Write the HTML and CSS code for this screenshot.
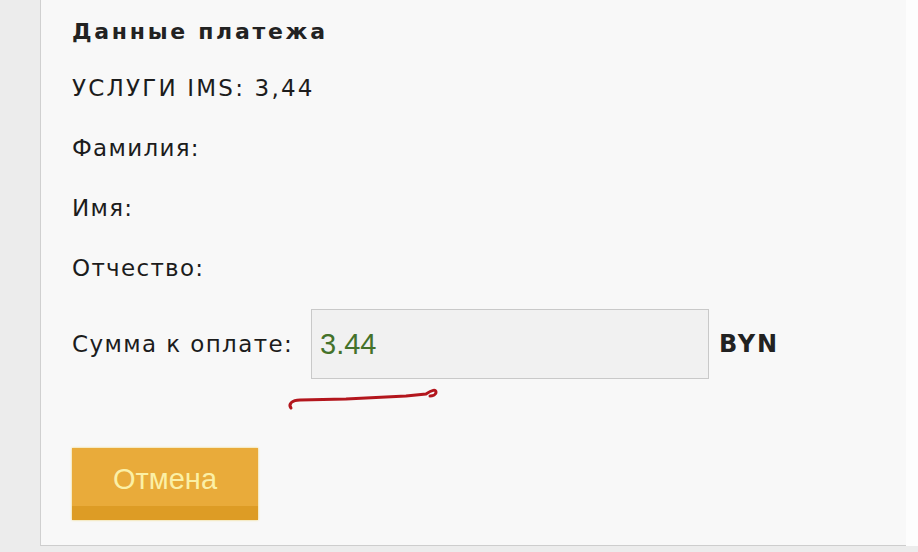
FILE: index.html
```html
<!DOCTYPE html>
<html lang="ru">
<head>
    <meta charset="UTF-8">
    <title>Данные платежа</title>
    <link rel="stylesheet" href="styles.css">
</head>
<body>

<div class="page">
    <div class="panel">
        <h2 class="title">Данные платежа</h2>
        <div class="row row-service">УСЛУГИ IMS: 3,44</div>
        <div class="row">Фамилия:</div>
        <div class="row">Имя:</div>
        <div class="row">Отчество:</div>

        <div class="sum-row">
            <label class="sum-label" for="sum">Сумма к оплате:</label>
            <input class="sum-input" id="sum" type="text" value="3.44" readonly>
            <span class="currency">BYN</span>
        </div>

        <!-- red pen mark under the amount -->
        <svg class="mark" width="160" height="30" viewBox="0 0 160 30">
            <path d="M5 22 C2 18 6 14 14 14 L60 13 L120 10 L140 8 C146 4 150 3 150 6 C150 9 146 10 144 10"
                  fill="none" stroke="#b3161d" stroke-width="3" stroke-linecap="round" stroke-linejoin="round"/>
        </svg>

        <button class="btn-cancel">Отмена</button>
    </div>
    <div class="edge"></div>
</div>

</body>
</html>
```

FILE: styles.css
```css
body { margin: 0; background: #ececec; font-family: "DejaVu Sans", Verdana, sans-serif; color: #1c1c1c; }
.page { display: flex; padding-left: 40px; height: 552px; }
.panel { width: 834px; height: 545px; padding-left: 31px; background: #f8f8f8; border-left: 1px solid #d0d0d0; border-bottom: 1px solid #cdcdcd; }
.edge { flex: 1; height: 546px; background: #fdfdfd; }
.title { margin: 0; padding-top: 19px; font-size: 22px; font-weight: bold; line-height: 26px; letter-spacing: 2.7px; color: #222; }
.row { font-size: 23px; line-height: 26px; margin-top: 34px; letter-spacing: 1.3px; }
.title + .row { margin-top: 30px; }
.row-service { letter-spacing: 2.2px; }
.sum-row { display: flex; align-items: center; margin-top: 28px; }
.sum-label { font-size: 23px; letter-spacing: 1.4px; width: 239px; }
.sum-input { width: 388px; height: 68px; padding: 0 0 0 8px; border: 1px solid #c9c9c9; background: #f1f1f1; font-family: "Liberation Sans", Arial, sans-serif; font-size: 29px; color: #44722a; outline: none; }
.currency { margin-left: 10px; font-size: 24px; font-weight: bold; letter-spacing: 1.8px; color: #222; }
.mark { display: block; margin: 7px 0 0 214px; }
.btn-cancel { display: block; margin-top: 32px; width: 186px; height: 72px; border: none; padding: 0 0 10px; background: linear-gradient(#e9ab3a 0, #e9ab3a 80%, #dd9c25 81%, #dd9c25 100%); box-shadow: 0 0 2px #f0d060; font-family: "Liberation Sans", Arial, sans-serif; font-size: 29px; color: #fbf0a6; cursor: pointer; }
```
